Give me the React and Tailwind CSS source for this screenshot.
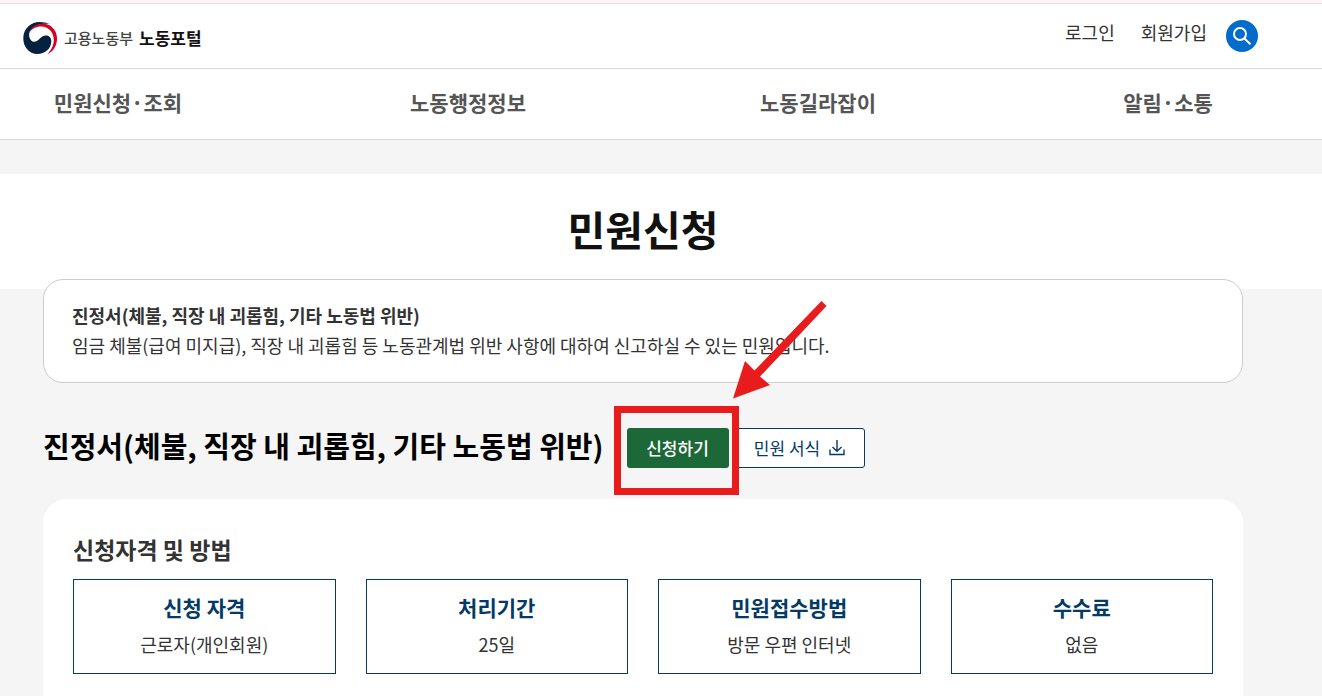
import React from "react";

const navItems = ["민원신청·조회", "노동행정정보", "노동길라잡이", "알림·소통"];

const summary = [
  { title: "신청 자격", value: "근로자(개인회원)" },
  { title: "처리기간", value: "25일" },
  { title: "민원접수방법", value: "방문 우편 인터넷" },
  { title: "수수료", value: "없음" },
];

function Logo() {
  return (
    <svg viewBox="0 0 34 34" className="h-[34px] w-[34px]" aria-hidden="true">
      <path
        fill="#04213f"
        d="M27 3C21 2 11 3 7 10C5 14 6.500 20.700 11 20.700C16.500 20.700 17 14.500 23 14.500C26.500 14.500 28.300 17 28.300 20C28.300 28 21.500 33 14.500 33C6 33 .3 26 .3 17.300C.3 8 7.500 1 16.500 1C20.500 1 24 1.800 27 3Z"
      />
      <path
        fill="#d6001f"
        d="M6.500 11.500C9 5 15 2.300 21 2.800C29 3.700 34 10 34 17.500C34 25 30 31 24.500 33C28 29.500 30.800 24.500 30.800 19C30.800 11.500 26 5.800 18.500 5.500C13.500 5.300 9 7.500 6.500 11.500Z"
      />
    </svg>
  );
}

function SearchIcon() {
  return (
    <svg viewBox="0 0 20 20" className="h-5 w-5" fill="none" stroke="white" strokeWidth="2" aria-hidden="true">
      <circle cx="8" cy="8" r="6" />
      <path d="M12.200 12.200L18.500 18.300" />
    </svg>
  );
}

function DownloadIcon() {
  return (
    <svg viewBox="0 0 16 16" className="h-4 w-4" fill="none" stroke="#063a66" strokeWidth="1.400" aria-hidden="true">
      <path d="M8 0V11M3.500 7L8 11.200L12.500 7M1 9.500V14.500H15V9.500" />
    </svg>
  );
}

function Arrow() {
  return (
    <svg
      viewBox="0 0 94 98"
      className="pointer-events-none absolute -top-[127px] left-[106px] h-[98px] w-[94px]"
      fill="#e81c1c"
      aria-hidden="true"
    >
      <path d="M88.500 0L93.500 5L27 75.500L37 84L0 97.500L12 60L21.500 69.500Z" />
    </svg>
  );
}

export default function App() {
  return (
    <div className="min-h-screen bg-[#f5f5f5] font-['Noto_Sans_CJK_KR','Noto_Sans',sans-serif] text-[#333]">
      <div className="h-1 border-b border-[#ecdadd] bg-[#fff5f7]" />
      <header className="bg-white">
        <div className="flex h-[65px] items-center justify-between border-b border-[#d8d8d8] pr-16 pl-[23px]">
          <a href="#home" className="flex items-center gap-[7px] pt-1 whitespace-nowrap">
            <Logo />
            <span className="flex items-center gap-[6px]">
              <span className="text-[15px] font-medium text-[#444]">고용노동부</span>
              <strong className="text-[17px] font-bold text-[#111]">노동포털</strong>
            </span>
          </a>
          <div className="flex items-center text-lg leading-6">
            <a href="#login" className="mr-[26px] pb-2">로그인</a>
            <a href="#join" className="mr-[19px] pb-2">회원가입</a>
            <button type="button" aria-label="검색" className="flex h-8 w-8 items-center justify-center rounded-full bg-[#036bc9]">
              <SearchIcon />
            </button>
          </div>
        </div>
        <nav className="flex h-[71px] items-center justify-between border-b border-[#d8d8d8] pr-[79px] pb-1 pl-[43px]">
          {navItems.map((item) => (
            <a key={item} href="#menu" className="w-[150px] text-center text-[21px] leading-8 font-bold whitespace-nowrap text-[#555]">
              {item}
            </a>
          ))}
        </nav>
      </header>

      <div className="mt-[34px] h-[115px] bg-white pt-[26px] pr-[79px] pl-[43px]">
        <h1 className="text-center text-[41px] leading-[56px] font-bold text-[#111]">민원신청</h1>
      </div>

      <main className="-mt-[10px] pr-[79px] pl-[43px]">
        <section className="rounded-[20px] border border-[#ccc] bg-white px-7 pt-5 pb-[22px] text-lg leading-[30px]">
          <p className="font-bold">진정서(체불, 직장 내 괴롭힘, 기타 노동법 위반)</p>
          <p>임금 체불(급여 미지급), 직장 내 괴롭힘 등 노동관계법 위반 사항에 대하여 신고하실 수 있는 민원입니다.</p>
        </section>

        <div className="mt-[45px] flex items-start whitespace-nowrap">
          <h2 className="mr-[23px] text-[29px] leading-[34px] font-bold text-black">진정서(체불, 직장 내 괴롭힘, 기타 노동법 위반)</h2>
          <div className="relative flex gap-[6px]">
            <button type="button" className="h-10 w-[102px] rounded-[3px] bg-[#1d6838] text-[17px] font-medium text-white">
              신청하기
            </button>
            <button type="button" className="flex h-10 w-[130px] items-center justify-center gap-[9px] rounded-[3px] border border-[#063a66] bg-white text-[17px] text-[#063a66]">
              민원 서식
              <DownloadIcon />
            </button>
            <div className="pointer-events-none absolute -top-[22px] -left-[13px] h-[89px] w-[125px] border-[7px] border-[#e81c1c]" />
            <Arrow />
          </div>
        </div>

        <section className="mt-[31px] rounded-t-[24px] bg-white px-[30px] pt-8 pb-8">
          <h3 className="text-[23px] leading-9 font-bold">신청자격 및 방법</h3>
          <dl className="mt-3 grid grid-cols-4 gap-[30px] text-center">
            {summary.map(({ title, value }) => (
              <div key={title} className="border border-[#063a66] pt-3 pb-[15px]">
                <dt className="text-[21px] leading-[30px] font-bold text-[#063a66]">{title}</dt>
                <dd className="mt-2 text-lg leading-7">{value}</dd>
              </div>
            ))}
          </dl>
        </section>
      </main>
    </div>
  );
}
